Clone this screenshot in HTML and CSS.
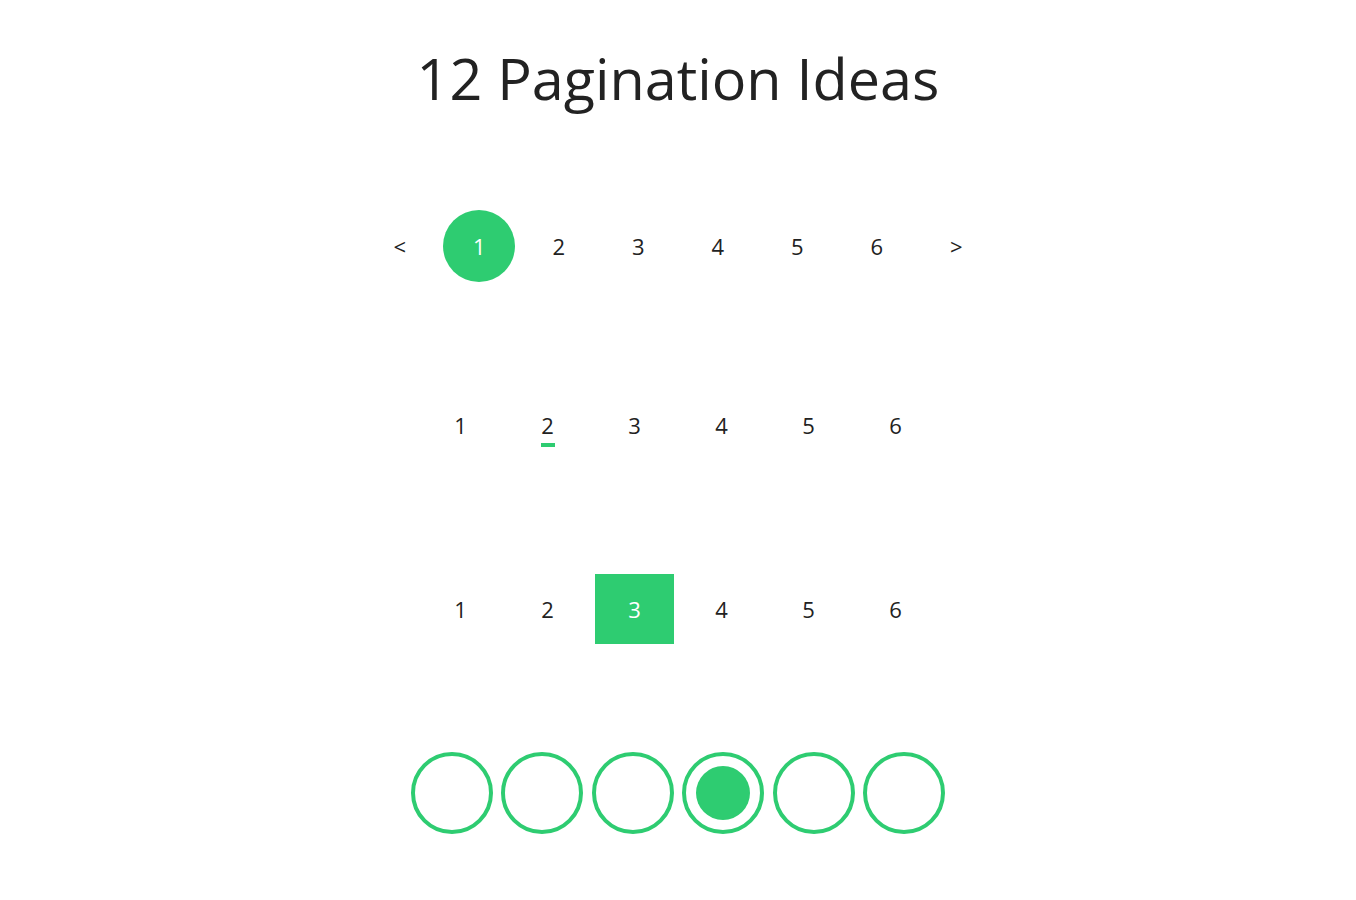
FILE: index.html
```html
<!DOCTYPE html>
<html lang="en">
  <head>
    <meta charset="UTF-8" />
    <meta name="viewport" content="width=device-width, initial-scale=1.0" />
    <title>12 Pagination Ideas</title>
    <link rel="stylesheet" href="styles.css">
  </head>
  <body>
    <h1>12 Pagination Ideas</h1>

    <!-- 1: round active page with arrows -->
    <ul class="pagination pagination-round">
      <li><a href="#">&lt;</a></li>
      <li class="active"><a href="#">1</a></li>
      <li><a href="#">2</a></li>
      <li><a href="#">3</a></li>
      <li><a href="#">4</a></li>
      <li><a href="#">5</a></li>
      <li><a href="#">6</a></li>
      <li><a href="#">&gt;</a></li>
    </ul>

    <!-- 2: underline marker -->
    <ul class="pagination pagination-line">
      <li><a href="#">1</a></li>
      <li class="active"><a href="#">2</a></li>
      <li><a href="#">3</a></li>
      <li><a href="#">4</a></li>
      <li><a href="#">5</a></li>
      <li><a href="#">6</a></li>
    </ul>

    <!-- 3: filled square -->
    <ul class="pagination pagination-square">
      <li><a href="#">1</a></li>
      <li><a href="#">2</a></li>
      <li class="active"><a href="#">3</a></li>
      <li><a href="#">4</a></li>
      <li><a href="#">5</a></li>
      <li><a href="#">6</a></li>
    </ul>

    <!-- 4: ring dots -->
    <ul class="pagination pagination-dots">
      <li><a href="#"></a></li>
      <li><a href="#"></a></li>
      <li><a href="#"></a></li>
      <li class="active"><a href="#"></a></li>
      <li><a href="#"></a></li>
      <li><a href="#"></a></li>
    </ul>
  </body>
</html>
```

FILE: styles.css
```css
* {
  margin: 0;
  padding: 0;
  box-sizing: border-box;
}

body {
  font-family: "Open Sans", sans-serif;
  color: #222;
  background: #fff;
  padding-top: 38px;
}

h1 {
  font-size: 57.5px;
  font-weight: 400;
  line-height: 80px;
  text-align: center;
}

.pagination {
  list-style: none;
  display: flex;
  justify-content: center;
}

.pagination a {
  display: flex;
  justify-content: center;
  align-items: center;
  height: 100%;
  color: #222;
  text-decoration: none;
  font-size: 22px;
}

/* Round */
.pagination-round {
  margin-top: 92px;
  gap: 7.5px;
}

.pagination-round li {
  width: 72px;
  height: 72px;
}

.pagination-round .active a {
  background: #2ecc71;
  color: #fff;
  border-radius: 50%;
}

/* Underline */
.pagination-line {
  margin-top: 108px;
  gap: 8px;
}

.pagination-line li {
  position: relative;
  width: 79px;
  height: 70px;
}

.pagination-line .active a::after {
  content: "";
  position: absolute;
  top: 53px;
  left: 50%;
  width: 14px;
  height: 4px;
  margin-left: -7px;
  background: #2ecc71;
}

/* Square */
.pagination-square {
  margin-top: 114px;
  gap: 8px;
}

.pagination-square li {
  width: 79px;
  height: 70px;
}

.pagination-square .active a {
  background: #2ecc71;
  color: #fff;
}

/* Dots */
.pagination-dots {
  margin-top: 108px;
  gap: 8.4px;
}

.pagination-dots li {
  width: 82px;
  height: 82px;
}

.pagination-dots a {
  border: 4px solid #2ecc71;
  border-radius: 50%;
}

.pagination-dots .active a::before {
  content: "";
  width: 54px;
  height: 54px;
  border-radius: 50%;
  background: #2ecc71;
}
```
